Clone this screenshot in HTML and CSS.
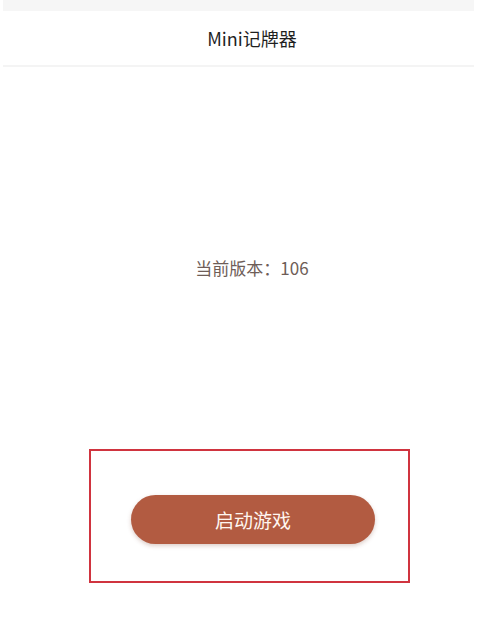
FILE: index.html
```html
<!DOCTYPE html>
<html lang="zh">
<head>
<meta charset="utf-8">
<title>Mini记牌器</title>
<link rel="stylesheet" href="styles.css">
</head>
<body>
<div class="app">
  <div class="status-bar"></div>
  <header class="nav">Mini记牌器</header>
  <main class="content">
    <p class="version">当前版本：106</p>
    <div class="action-box">
      <button class="start-btn" type="button">启动游戏</button>
    </div>
  </main>
</div>
</body>
</html>
```

FILE: styles.css
```css
html, body {
  margin: 0;
  padding: 0;
  background: #ffffff;
}
body {
  font-family: "Noto Sans CJK SC", "Noto Sans", sans-serif;
  width: 477px;
  height: 618px;
  overflow: hidden;
}
.app {
  display: flex;
  flex-direction: column;
  height: 618px;
  padding: 0 3px;
  box-sizing: border-box;
}
.status-bar {
  height: 11px;
  background: #f6f6f6;
}
.nav {
  height: 54px;
  display: flex;
  align-items: center;
  justify-content: center;
  padding-left: 27px;
  font-size: 18px;
  color: #1f1f1f;
  border-bottom: 2px solid #f4f4f4;
}
.content {
  flex: 1;
  display: flex;
  flex-direction: column;
  align-items: center;
  padding-left: 27px;
}
.version {
  margin: 188px 0 0;
  font-size: 17px;
  line-height: 26px;
  color: #6e5d57;
}
.action-box {
  margin-top: 168px;
  margin-right: 5px;
  width: 321px;
  height: 134px;
  box-sizing: border-box;
  border: 2px solid #d0343f;
  display: flex;
  align-items: center;
  justify-content: center;
}
.start-btn {
  width: 244px;
  height: 49px;
  border: none;
  border-radius: 25px;
  background: #b25b41;
  color: #fff6f0;
  font-family: "Noto Sans CJK SC", "Noto Sans", sans-serif;
  font-size: 19px;
  box-shadow: 0 2px 4px rgba(120, 60, 40, 0.25);
  padding: 0;
  margin-top: 6px;
  margin-left: 7px;
}
```
